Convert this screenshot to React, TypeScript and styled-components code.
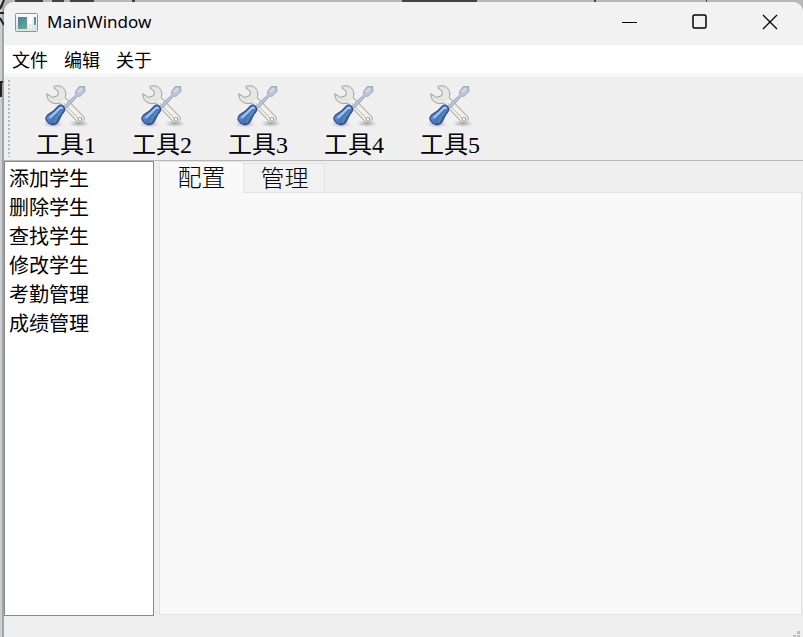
import React, { useState } from "react";
import styled, { createGlobalStyle } from "styled-components";

const GlobalStyle = createGlobalStyle`
  * { box-sizing: border-box; }
  html, body, #root { height: 100%; margin: 0; }
  body { overflow: hidden; }
  button { appearance: none; border: 0; padding: 0; margin: 0; background: none; color: inherit; font: inherit; }
`;

const Desktop = styled.div`
  position: relative;
  min-height: 100vh;
  display: flex;
  padding: 2px 0 0 4px;
  background: #b8b8b8;
`;

const Backdrop = styled.svg`
  position: absolute;
  inset: 0;
  width: 100%;
  height: 100%;
`;

const Window = styled.main`
  position: relative;
  flex: 1;
  min-width: 0;
  display: flex;
  flex-direction: column;
  overflow: hidden;
  border-radius: 10px 10px 0 0;
  background: #efefef;
  color: #000;
  font-family: "Noto Sans", "Noto Sans CJK SC", sans-serif;
`;

const TitleBar = styled.header`
  display: flex;
  align-items: center;
  height: 43px;
  padding: 0 0 3px 11px;
  gap: 9px;
  background: #f2f2f2;
`;

const Title = styled.h1`
  flex: 1;
  margin: 0;
  font-size: 17px;
  line-height: 24px;
  font-weight: 400;
`;

const Captions = styled.div`
  display: flex;
  margin-right: -2px;
`;

const Caption = styled.button`
  display: grid;
  place-items: center;
  width: 70px;
  height: 40px;
`;

const MenuBar = styled.nav`
  display: flex;
  height: 32px;
  padding-bottom: 2px;
  background: linear-gradient(#fff 29px, #f0f0f0 29px 30px, #fff 30px 31px, #efefef 31px);
`;

const MenuItem = styled.button`
  padding: 0 8px;
  font-size: 18px;
  line-height: 30px;
  font-weight: 400;
`;

const ToolBar = styled.div`
  display: flex;
  height: 84px;
  padding-left: 4px;
  border-bottom: 1px solid #b8b8b8;
`;

const Grip = styled.span`
  width: 2px;
  margin: 3px 8px 3px 0;
  background: repeating-linear-gradient(#b9b9b9 0 2px, transparent 2px 4px);
`;

const ToolButton = styled.button`
  display: flex;
  flex-direction: column;
  align-items: center;
  width: 96px;
  padding-top: 6px;
  font: 400 24px/24px "Liberation Serif", "Noto Sans CJK SC", serif;
`;

const Body = styled.div`
  flex: 1;
  display: flex;
  gap: 5px;
  padding-right: 1px;
`;

const List = styled.div`
  width: 150px;
  display: flex;
  flex-direction: column;
  padding: 2px 4px;
  border: 1px solid #828790;
  background: #fff;
`;

const ListItem = styled.button`
  text-align: left;
  font-size: 20px;
  line-height: 29px;
  font-weight: 400;
`;

const Tabs = styled.section`
  flex: 1;
  display: flex;
  flex-direction: column;
  padding-bottom: 1px;
`;

const TabStrip = styled.div`
  display: flex;
  align-items: flex-end;
  height: 31px;
`;

const Tab = styled.button<{ $active: boolean }>`
  position: relative;
  z-index: ${(p) => (p.$active ? 1 : 0)};
  width: ${(p) => (p.$active ? 85 : 81)}px;
  height: ${(p) => (p.$active ? 32 : 29)}px;
  margin-bottom: ${(p) => (p.$active ? -1 : 0)}px;
  padding-bottom: ${(p) => (p.$active ? 2 : 0)}px;
  border: 1px solid #e3e3e3;
  border-bottom: 0;
  border-left-color: ${(p) => (p.$active ? "#e3e3e3" : "transparent")};
  background: ${(p) => (p.$active ? "#f9f9f9" : "#f1f1f1")};
  font-size: 24px;
  line-height: 28px;
  font-weight: 300;
`;

const Pane = styled.div`
  flex: 1;
  border: 1px solid #e3e3e3;
  background: #f9f9f9;
`;

const StatusBar = styled.footer`
  display: flex;
  justify-content: flex-end;
  align-items: flex-end;
  height: 21px;
  padding-right: 2px;
`;

function AppIcon() {
  return (
    <svg width="23" height="19" viewBox="0 0 23 19" aria-hidden="true">
      <defs>
        <linearGradient id="frame" x2="0" y2="1"><stop stopColor="#fbfbfb" /><stop offset="1" stopColor="#dedfe1" /></linearGradient>
        <linearGradient id="view" x2=".6" y2="1"><stop stopColor="#4b7bb0" /><stop offset="1" stopColor="#5cab87" /></linearGradient>
      </defs>
      <rect x=".5" y=".5" width="22" height="18" rx="1" fill="url(#frame)" stroke="#8b929a" />
      <rect x="3" y="4" width="9" height="12" fill="url(#view)" />
      <rect x="13" y="4" width="4" height="7" fill="#fff" />
      <rect x="13" y="12" width="4" height="4" fill="#eee" />
      <rect x="19" y="4" width="2" height="8" fill="url(#view)" />
    </svg>
  );
}

function ToolsIcon() {
  return (
    <svg width="48" height="50" viewBox="0 0 48 50" aria-hidden="true">
      <defs>
        <radialGradient id="shade"><stop stopColor="#000" stopOpacity=".3" /><stop offset="1" stopColor="#000" stopOpacity="0" /></radialGradient>
        <linearGradient id="steel" x2="1" y2="1"><stop stopColor="#e2e2e0" /><stop offset="1" stopColor="#f1f1ef" /></linearGradient>
        <linearGradient id="grip" x2="1" y2="1"><stop stopColor="#79a4da" /><stop offset="1" stopColor="#24549b" /></linearGradient>
      </defs>
      <ellipse cx="11" cy="41" rx="10" ry="3.500" fill="url(#shade)" />
      <ellipse cx="37" cy="40.500" rx="10" ry="3.500" fill="url(#shade)" />
      <path d="M12 3.500C15 2.300 19 2.600 21.500 5.200c2.800 3 2.800 6.500 1.700 9.300L41.500 33.500c2.500 3.500-2.300 8.300-6 5.300L17.500 20c-5 1.800-11.500-.6-12.500-6.500l-.2-2.700 5.600 3.600 5.300-1.700.7-4.300L12 5z" fill="url(#steel)" stroke="#9b9c99" strokeLinejoin="round" />
      <path d="M21 17.500L39 36.500" stroke="#fff" strokeWidth="1.400" />
      <path d="M22 20L36 35" stroke="#c9c9c6" strokeWidth="1.200" />
      <circle cx="38" cy="36" r="1.800" fill="#fff" stroke="#999b96" />
      <path d="M22.500 23L34 11.500l-.5-3 3.700-4.700 5.300-.3.500 4.900-4.800 4.700-2.700.2-11 11.700z" fill="#b9c7d8" stroke="#96a2b2" strokeLinejoin="round" />
      <path d="M36 9l4-3.500" stroke="#dce5ee" strokeWidth="1.600" />
      <path d="M16.500 23c2.700-3 7.800 1.500 5.600 5.400L19.500 32l-3.200 6.500c-2 3.700-6.200 4-9.600 1.600-3.700-2.600-3.500-5.600-.8-8.400l6-4z" fill="url(#grip)" stroke="#204a87" strokeWidth="1.100" />
      <path d="M18 25l-5 5-5 4.500" fill="none" stroke="#a9c7ec" strokeWidth="2" strokeLinecap="round" />
      <path d="M19.500 28.500l-4 4.500-3 6" fill="none" stroke="#5d8cc8" strokeWidth="1.300" strokeLinecap="round" />
      <circle cx="19.500" cy="25" r="1.300" fill="#b6d0ee" />
    </svg>
  );
}

const menus = ["文件", "编辑", "关于"];
const tools = ["工具1", "工具2", "工具3", "工具4", "工具5"];
const actions = ["添加学生", "删除学生", "查找学生", "修改学生", "考勤管理", "成绩管理"];
const tabs = ["配置", "管理"];

export default function App() {
  const [active, setActive] = useState(0);
  return (
    <Desktop>
      <GlobalStyle />
      <Backdrop aria-hidden="true">
        <path d="M1 0v637" stroke="#ccced0" strokeWidth="2" />
        <path d="M3 4v633" stroke="#a3a4a6" strokeWidth="2" />
        <path d="M4 0L0 9M0 13h4M0 18l4 7M0 82h3M1 82v15" fill="none" stroke="#222" strokeWidth="2" />
        <path d="M15 1h28M52 1h12M70 1h24M132 1h3M402 1h75M594 1h2M706 1h1" stroke="#444" strokeWidth="2" />
      </Backdrop>
      <Window>
        <TitleBar>
          <AppIcon />
          <Title>MainWindow</Title>
          <Captions>
            <Caption aria-label="Minimize"><svg width="16" height="16"><path d="M0 8.500h15" stroke="#000" /></svg></Caption>
            <Caption aria-label="Maximize"><svg width="16" height="16"><rect x="1" y="1" width="13" height="13" rx="1.500" fill="none" stroke="#000" strokeWidth="1.500" /></svg></Caption>
            <Caption aria-label="Close"><svg width="16" height="16"><path d="M1 1l14 14M15 1L1 15" stroke="#000" strokeWidth="1.300" /></svg></Caption>
          </Captions>
        </TitleBar>
        <MenuBar>{menus.map((m) => <MenuItem key={m}>{m}</MenuItem>)}</MenuBar>
        <ToolBar role="toolbar">
          <Grip />
          {tools.map((t) => <ToolButton key={t}><ToolsIcon />{t}</ToolButton>)}
        </ToolBar>
        <Body>
          <List>{actions.map((a) => <ListItem key={a}>{a}</ListItem>)}</List>
          <Tabs>
            <TabStrip role="tablist">
              {tabs.map((t, i) => (
                <Tab key={t} id={`tab-${i}`} role="tab" aria-selected={i === active} aria-controls="pane" $active={i === active} onClick={() => setActive(i)}>{t}</Tab>
              ))}
            </TabStrip>
            <Pane id="pane" role="tabpanel" aria-labelledby={`tab-${active}`} />
          </Tabs>
        </Body>
        <StatusBar>
          <svg width="8" height="6" aria-hidden="true"><path d="M4 0h3v3h-3zM0 4h3v2h-3zM4 4h3v2h-3z" fill="#bfbfbf" /></svg>
        </StatusBar>
      </Window>
    </Desktop>
  );
}
